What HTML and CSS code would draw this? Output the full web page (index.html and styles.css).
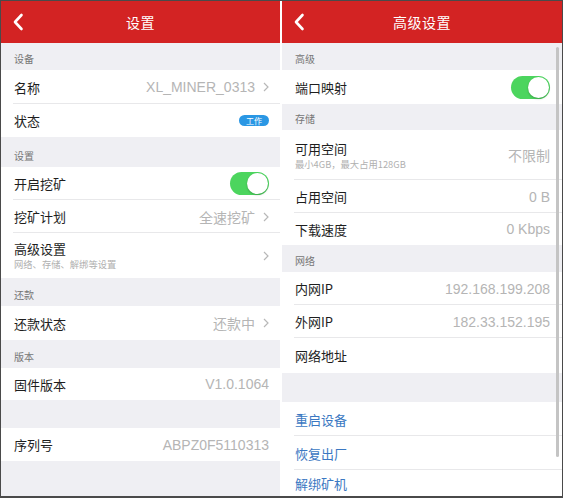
FILE: index.html
```html
<!DOCTYPE html>
<html lang="zh-CN">
<head>
    <meta charset="UTF-8">
    <title>设置</title>
    <link rel="stylesheet" href="styles.css">
</head>
<body>
<div class="frame">

    <!-- 设置 -->
    <div class="phone">
        <div class="topbar">
            <svg class="back" width="12" height="18" viewBox="0 0 12 18"><path d="M9.5 2 L3 9 L9.5 16" fill="none" stroke="#fff" stroke-width="2.6" stroke-linecap="round" stroke-linejoin="round"/></svg>
            <span class="title">设置</span>
        </div>

        <div class="band h27"><span>设备</span></div>
        <div class="row h34 line">
            <span class="name">名称</span>
            <span class="value">XL_MINER_0313</span>
            <svg class="chev" width="6" height="10" viewBox="0 0 6 10"><path d="M1 1 L5 5 L1 9" fill="none" stroke="#b8b8b8" stroke-width="1.2"/></svg>
        </div>
        <div class="row h33">
            <span class="name">状态</span>
            <span class="badge">工作</span>
        </div>

        <div class="band h30"><span>设置</span></div>
        <div class="row h33 line">
            <span class="name">开启挖矿</span>
            <span class="switch"><span class="knob"></span></span>
        </div>
        <div class="row h33 line">
            <span class="name">挖矿计划</span>
            <span class="value">全速挖矿</span>
            <svg class="chev" width="6" height="10" viewBox="0 0 6 10"><path d="M1 1 L5 5 L1 9" fill="none" stroke="#b8b8b8" stroke-width="1.2"/></svg>
        </div>
        <div class="row h45">
            <div class="stack">
                <span class="name">高级设置</span>
                <span class="sub">网络、存储、解绑等设置</span>
            </div>
            <svg class="chev" width="6" height="10" viewBox="0 0 6 10"><path d="M1 1 L5 5 L1 9" fill="none" stroke="#b8b8b8" stroke-width="1.2"/></svg>
        </div>

        <div class="band h28"><span>还款</span></div>
        <div class="row h34">
            <span class="name">还款状态</span>
            <span class="value">还款中</span>
            <svg class="chev" width="6" height="10" viewBox="0 0 6 10"><path d="M1 1 L5 5 L1 9" fill="none" stroke="#b8b8b8" stroke-width="1.2"/></svg>
        </div>

        <div class="band h28"><span>版本</span></div>
        <div class="row h32">
            <span class="name">固件版本</span>
            <span class="value">V1.0.1064</span>
        </div>

        <div class="band h28"></div>
        <div class="row h33">
            <span class="name">序列号</span>
            <span class="value">ABPZ0F5110313</span>
        </div>
        <div class="band fill"></div>
    </div>

    <!-- 高级设置 -->
    <div class="phone">
        <div class="topbar">
            <svg class="back" width="12" height="18" viewBox="0 0 12 18"><path d="M9.5 2 L3 9 L9.5 16" fill="none" stroke="#fff" stroke-width="2.6" stroke-linecap="round" stroke-linejoin="round"/></svg>
            <span class="title">高级设置</span>
        </div>

        <div class="band h27"><span>高级</span></div>
        <div class="row h34">
            <span class="name">端口映射</span>
            <span class="switch"><span class="knob"></span></span>
        </div>

        <div class="band h26"><span>存储</span></div>
        <div class="row h50 line">
            <div class="stack">
                <span class="name">可用空间</span>
                <span class="sub">最小4GB，最大占用128GB</span>
            </div>
            <span class="value">不限制</span>
        </div>
        <div class="row h33 line">
            <span class="name">占用空间</span>
            <span class="value">0 B</span>
        </div>
        <div class="row h32">
            <span class="name">下载速度</span>
            <span class="value">0 Kbps</span>
        </div>

        <div class="band h27"><span>网络</span></div>
        <div class="row h33 line">
            <span class="name">内网IP</span>
            <span class="value">192.168.199.208</span>
        </div>
        <div class="row h33 line">
            <span class="name">外网IP</span>
            <span class="value">182.33.152.195</span>
        </div>
        <div class="row h35">
            <span class="name">网络地址</span>
        </div>

        <div class="band h29"></div>
        <div class="row h34 line">
            <span class="name link">重启设备</span>
        </div>
        <div class="row h34 line">
            <span class="name link">恢复出厂</span>
        </div>
        <div class="row last">
            <span class="name link">解绑矿机</span>
        </div>

        <div class="scrollbar"></div>
    </div>

</div>
</body>
</html>
```

FILE: styles.css
```css
* {
    box-sizing: border-box;
}
html, body {
    margin: 0;
    padding: 0;
    background: #fff;
}
body {
    font-family: "Noto Sans CJK SC", "Noto Sans", "Liberation Sans", sans-serif;
}
.frame {
    width: 563px;
    height: 498px;
    border: 1px solid #4a4a4a;
    border-bottom-width: 2px;
    display: flex;
    gap: 2px;
    background: #fff;
    overflow: hidden;
}
.phone {
    position: relative;
    width: 279px;
    display: flex;
    flex-direction: column;
    background: #fff;
}
.phone + .phone {
    width: 280px;
}

/* barra superior */
.topbar {
    height: 42px;
    flex: none;
    background: #d32323;
    display: flex;
    align-items: center;
    justify-content: center;
    position: relative;
}
.topbar .back {
    position: absolute;
    left: 11px;
    top: 12px;
}
.topbar .title {
    color: #fff;
    font-size: 14px;
    letter-spacing: 0.5px;
}

/* bandas de sección */
.band {
    flex: none;
    background: #efeff3;
    display: flex;
    align-items: flex-end;
    padding: 0 0 4px 13px;
}
.band span {
    font-size: 10px;
    color: #767676;
    line-height: 14px;
}
.band.fill {
    flex: 1;
}

/* filas */
.row {
    flex: none;
    display: flex;
    align-items: center;
    padding: 0 11px 0 13px;
    position: relative;
    background: #fff;
}
.phone + .phone .row {
    padding-right: 12px;
}
.row.line::after {
    content: "";
    position: absolute;
    left: 12px;
    right: 0;
    bottom: 0;
    height: 1px;
    background: #e8e8ea;
}
.row.last {
    flex: 1;
}
.name {
    font-size: 13px;
    color: #1e1e1e;
    flex: none;
}
.name.link {
    color: #3b78c2;
}
.value {
    margin-left: auto;
    font-size: 14px;
    color: #b5b5b5;
    font-family: "Liberation Sans", "Noto Sans CJK SC", sans-serif;
}
.chev {
    margin-left: 8px;
    flex: none;
}
.row .stack + .chev {
    margin-left: auto;
}
.stack {
    display: flex;
    flex-direction: column;
}
.stack .name {
    line-height: 18px;
}
.sub {
    font-size: 9.3px;
    color: #b0b0b0;
    line-height: 13px;
}

.h26 { height: 26px; }
.h27 { height: 27px; }
.h28 { height: 28px; }
.h29 { height: 29px; }
.h30 { height: 30px; }
.h32 { height: 32px; }
.h33 { height: 33px; }
.h34 { height: 34px; }
.h35 { height: 35px; }
.h45 { height: 45px; }
.h50 { height: 50px; }

/* estado */
.badge {
    margin-left: auto;
    background: #2a97e4;
    color: #fff;
    font-size: 8px;
    line-height: 11px;
    height: 11px;
    padding: 0 7px;
    border-radius: 6px;
}

/* interruptor */
.switch {
    margin-left: auto;
    width: 39px;
    height: 23px;
    border-radius: 12px;
    background: #4cd55e;
    position: relative;
    flex: none;
}
.switch .knob {
    position: absolute;
    right: 1px;
    top: 1px;
    width: 21px;
    height: 21px;
    border-radius: 50%;
    background: #fff;
    box-shadow: 0 1px 2px rgba(0, 0, 0, 0.25);
}

.scrollbar {
    position: absolute;
    right: 3px;
    top: 46px;
    width: 3px;
    height: 410px;
    border-radius: 2px;
    background: #c4c4c4;
}
```
